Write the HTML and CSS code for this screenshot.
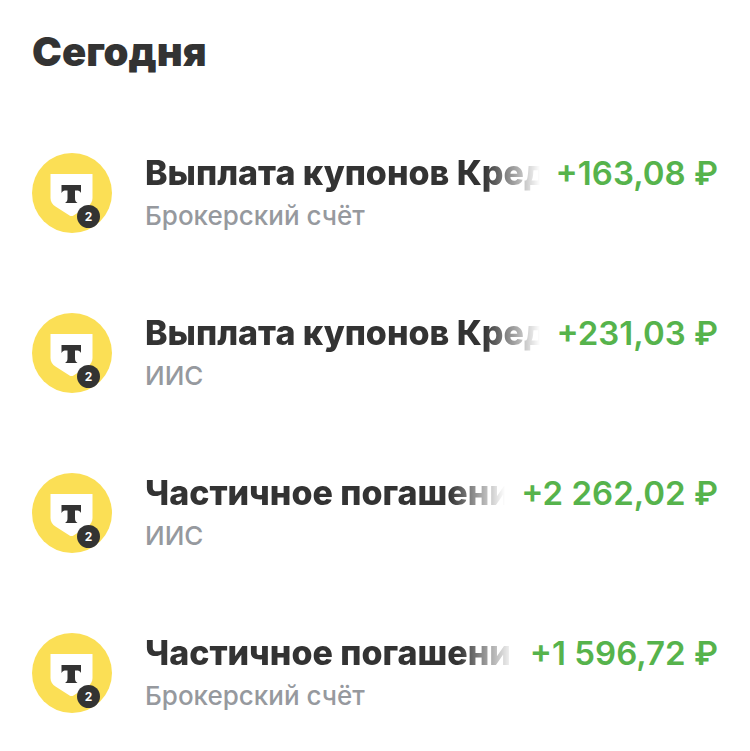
FILE: index.html
```html
<!DOCTYPE html>
<html lang="ru">
<head>
    <meta charset="UTF-8">
    <meta name="viewport" content="width=device-width, initial-scale=1.0">
    <title>Операции</title>
    <link rel="stylesheet" href="styles.css">
</head>
<body>
    <svg width="0" height="0" class="sprite" aria-hidden="true">
        <symbol id="logo" viewBox="0 0 80 80">
            <circle cx="40" cy="40" r="40" fill="#fbdf55"/>
            <path d="M18.5 21h42v24c0 4-2 6.500-5 8.500L41.500 62.500q-2 1-4 0L23.500 53.500c-3-2-5-4.500-5-8.500z" fill="#fff"/>
            <path d="M29.500 32H49v8c-1-2-2.500-2.500-4.500-2.500h-1.500V45c0 2.500.5 3.500 2.500 5H33c2-1.500 2.500-2.500 2.500-5v-7.500H34c-2 0-3.500.5-4.500 2.500z" fill="#333"/>
        </symbol>
    </svg>
    <main class="history">
        <h1 class="day">Сегодня</h1>
        <ul class="list">
            <li class="item">
                <div class="icon">
                    <svg class="logo"><use href="#logo"/></svg>
                    <span class="badge">2</span>
                </div>
                <div class="info">
                    <div class="row">
                        <h2 class="title">Выплата купонов Кред</h2>
                        <span class="amount">+163,08 ₽</span>
                    </div>
                    <p class="account">Брокерский счёт</p>
                </div>
            </li>
            <li class="item">
                <div class="icon">
                    <svg class="logo"><use href="#logo"/></svg>
                    <span class="badge">2</span>
                </div>
                <div class="info">
                    <div class="row">
                        <h2 class="title">Выплата купонов Кред</h2>
                        <span class="amount">+231,03 ₽</span>
                    </div>
                    <p class="account">ИИС</p>
                </div>
            </li>
            <li class="item">
                <div class="icon">
                    <svg class="logo"><use href="#logo"/></svg>
                    <span class="badge">2</span>
                </div>
                <div class="info">
                    <div class="row">
                        <h2 class="title">Частичное погашени</h2>
                        <span class="amount">+2 262,02 ₽</span>
                    </div>
                    <p class="account">ИИС</p>
                </div>
            </li>
            <li class="item">
                <div class="icon">
                    <svg class="logo"><use href="#logo"/></svg>
                    <span class="badge">2</span>
                </div>
                <div class="info">
                    <div class="row">
                        <h2 class="title">Частичное погашени</h2>
                        <span class="amount">+1 596,72 ₽</span>
                    </div>
                    <p class="account">Брокерский счёт</p>
                </div>
            </li>
        </ul>
    </main>
</body>
</html>
```

FILE: styles.css
```css
body {
    font-family: Inter, "Liberation Sans", sans-serif;
    background-color: #ffffff;
    color: #333333;
    margin: 0;
}
.sprite {
    position: absolute;
}
.history {
    padding: 32px;
}
.day {
    margin: 0 0 81px;
    font-size: 40px;
    line-height: 40px;
    font-weight: 900;
}
.list {
    display: flex;
    flex-direction: column;
    gap: 80px;
    list-style: none;
    margin: 0;
    padding: 0;
}
.item {
    display: flex;
    align-items: center;
    gap: 33px;
    height: 80px;
}
.icon {
    position: relative;
    flex: none;
    width: 80px;
    height: 80px;
}
.logo {
    display: block;
    width: 80px;
    height: 80px;
}
.badge {
    position: absolute;
    right: 12px;
    bottom: 5px;
    width: 23px;
    height: 23px;
    border-radius: 50%;
    background-color: #333333;
    color: #ffffff;
    font-size: 12px;
    line-height: 23px;
    font-weight: 700;
    text-align: center;
}
.info {
    flex: 1;
    min-width: 0;
    padding-top: 2px;
}
.row {
    display: flex;
    gap: 16px;
}
.title {
    flex: 1;
    min-width: 0;
    margin: 0;
    overflow: hidden;
    white-space: nowrap;
    font-size: 34px;
    line-height: 44px;
    font-weight: 800;
    -webkit-mask-image: linear-gradient(to left, transparent, #000 56px);
    mask-image: linear-gradient(to left, transparent, #000 56px);
}
.amount {
    flex: none;
    color: #56b34c;
    font-size: 33px;
    line-height: 44px;
    font-weight: 600;
}
.account {
    margin: 0;
    color: #96999e;
    font-size: 26px;
    line-height: 42px;
    font-weight: 500;
}
```
